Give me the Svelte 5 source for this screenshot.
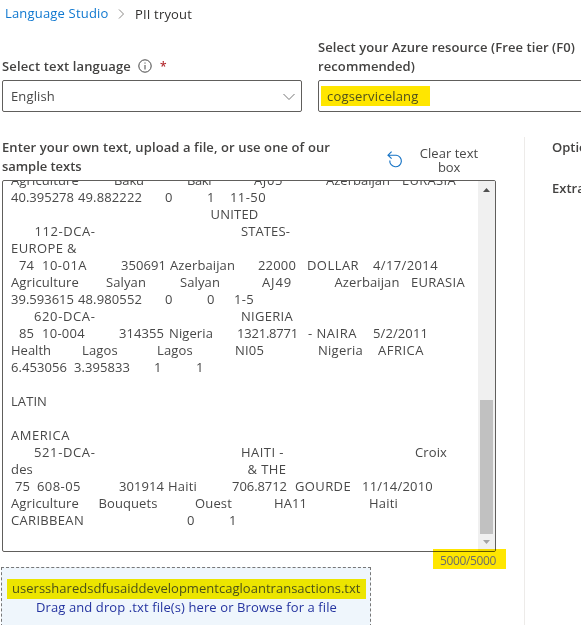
<script>
  // Each line holds runs of [start, width, text]; starts are measured from the pane's left edge.
  const lines = [
    [[11, 68, 'Agriculture'], [114, 30, 'Baku'], [187, 24, 'Baki'], [254, 29, 'AJ05'], [326, 64, 'Azerbaijan'], [402, 54, 'EURASIA']],
    [[11, 63, '40.395278'], [78, 64, '49.882222'], [165, 8, '0'], [207, 8, '1'], [230, 36, '11-50']],
    [[210.5, 48, 'UNITED']],
    [[34.5, 61, '112-DCA-'], [241, 49, 'STATES-']],
    [[11, 66, 'EUROPE &']],
    [[19, 15, '74'], [42, 45, '10-01A'], [121, 45, '350691'], [170, 65, 'Azerbaijan'], [258, 38, '22000'], [307, 52, 'DOLLAR'], [373, 65, '4/17/2014']],
    [[11, 68, 'Agriculture'], [106, 40, 'Salyan'], [180, 40, 'Salyan'], [262, 30, 'AJ49'], [334.5, 65, 'Azerbaijan'], [411, 54, 'EURASIA']],
    [[11, 63, '39.593615'], [78, 64, '48.980552'], [165, 8, '0'], [207, 8, '0'], [234, 20, '1-5']],
    [[34, 61.5, '620-DCA-'], [241, 52, 'NIGERIA']],
    [[19, 15, '85'], [42, 43, '10-004'], [119, 45, '314355'], [169, 44, 'Nigeria'], [237, 61, '1321.8771'], [308, 49, '- NAIRA'], [373, 55, '5/2/2011']],
    [[11, 40, 'Health'], [82, 36, 'Lagos'], [157, 36, 'Lagos'], [235, 29, 'NI05'], [318, 45, 'Nigeria'], [378, 46, 'AFRICA']],
    [[11, 56, '6.453056'], [74, 56, '3.395833'], [154, 8, '1'], [196, 8, '1']],
    [],
    [[11, 36, 'LATIN']],
    [],
    [[11, 59, 'AMERICA']],
    [[34, 61.5, '521-DCA-'], [241, 43, 'HAITI -'], [415, 32, 'Croix']],
    [[11, 22, 'des'], [247.5, 39, '& THE']],
    [[15, 15, '75'], [37, 44, '608-05'], [119, 45, '301914'], [168, 29, 'Haiti'], [232, 55, '706.8712'], [295, 56, 'GOURDE'], [362, 71, '11/14/2010']],
    [[11, 68, 'Agriculture'], [98.5, 59, 'Bouquets'], [195, 37, 'Ouest'], [274, 33, 'HA11'], [369, 29, 'Haiti']],
    [[11, 73, 'CARIBBEAN'], [187, 8, '0'], [229, 8, '1']]
  ];

  const gap = (line, i) => line[i][0] - (i ? line[i - 1][0] + line[i - 1][1] : 3);

  // Adjusts tracking so that a run of text fills its column.
  function fit(node, width) {
    const range = document.createRange();
    range.selectNodeContents(node);
    const n = node.textContent.length;
    if (n > 1) node.style.letterSpacing = (width - range.getBoundingClientRect().width) / n + 'px';
  }
</script>

<main>
  <nav>
    <a href="#studio" use:fit={103.5}>Language Studio</a>
    <svg width="7" height="10" viewBox="0 0 7 10"><path d="M1 .5 5.5 5 1 9.5" fill="none" stroke="#8a8886" /></svg>
    <span use:fit={57}>PII tryout</span>
  </nav>

  <section class="fields">
    <div class="field lang">
      <div class="label">
        <b use:fit={129}>Select text language</b>
        <svg class="info" width="14" height="14" viewBox="0 0 14 14"><circle cx="7" cy="7" r="6.2" fill="none" stroke="#444" /><path d="M7 6v4.5M7 3.5v1.1" stroke="#444" /></svg>
        <i>*</i>
      </div>
      <div class="select">
        <span use:fit={44}>English</span>
        <svg width="12" height="8" viewBox="0 0 12 8"><path d="M.5 1 6 6.5 11.5 1" fill="none" stroke="#777" /></svg>
      </div>
    </div>
    <div class="field resource">
      <div class="label"><b use:fit={257}>Select your Azure resource (Free tier (F0)</b><b use:fit={97}>recommended)</b></div>
      <div class="select"><mark><span use:fit={91.5}>cogservicelang</span></mark></div>
    </div>
  </section>

  <section class="work">
    <div class="left">
      <div class="tools">
        <div class="prompt"><b use:fit={328}>Enter your own text, upload a file, or use one of our</b><b use:fit={79.5}>sample texts</b></div>
        <svg width="16" height="17" viewBox="0 0 16 17"><path d="M4.6.7 1 4.2 4.6 7.6M1 4.2h8.2a5.8 5.8 0 1 1-6.4 5.3" fill="none" stroke="#1673c5" stroke-width="1.15" /></svg>
        <div class="clear"><span use:fit={58.5}>Clear text</span><span use:fit={22}>box</span></div>
      </div>
      <div class="pane">
        <div class="text">
          {#each lines as line}
            <div class="line">{#each line as run, i}<span style:margin-left="{gap(line, i)}px" style:width="{run[1]}px" use:fit={run[1]}>{run[2]}</span>{/each}</div>
          {/each}
        </div>
        <div class="bar">
          <svg width="7" height="4" viewBox="0 0 7 4"><path d="M0 4 3.5 0 7 4z" fill="#505050" /></svg>
          <div class="thumb"></div>
          <svg width="7" height="4" viewBox="0 0 7 4"><path d="M0 0h7L3.5 4z" fill="#a3a3a3" /></svg>
        </div>
      </div>
      <div class="count"><span use:fit={56}>5000/5000</span></div>
      <div class="drop">
        <div class="file"><span use:fit={348.5}>userssharedsdfusaiddevelopmentcagloantransactions.txt</span></div>
        <div class="hint"><span use:fit={301}>Drag and drop .txt file(s) here or Browse for a file</span></div>
      </div>
    </div>
    <aside><b>Options</b><b>Extracted</b></aside>
  </section>
</main>

<style>
  :global(body) { margin: 0; overflow: hidden; background: #fff; }
  main { width: 581px; height: 625px; overflow: hidden; display: flex; flex-direction: column; font: 13px/17px 'Open Sans', 'Noto Sans', sans-serif; color: #484848; }
  main * { box-sizing: border-box; }
  svg { display: block; flex: none; }
  span, b, a { white-space: nowrap; }
  b { font-weight: 600; color: #434241; }
  nav { height: 38px; padding: 5px 0 0 5px; display: flex; align-items: flex-start; color: #323130; }
  nav a { color: #0f78d0; text-decoration: none; width: 104px; }
  nav svg { margin: 4px 10px 0 9px; }
  nav span { padding-top: 1px; }
  .fields { display: flex; height: 97px; flex: none; }
  .field { display: flex; flex-direction: column; flex: none; }
  .lang { width: 300px; margin-left: 2px; }
  .resource { width: 300px; margin-left: 16px; }
  .label { height: 42px; display: flex; line-height: 19px; }
  .lang .label { align-items: flex-end; padding-bottom: 4px; }
  .lang b { width: 129px; }
  .info { margin: 0 0 3px 7px; }
  i { font: 600 12px/19px 'Open Sans', sans-serif; color: #b3292e; margin-left: 8px; }
  .resource .label { flex-direction: column; }
  .select { height: 32px; border: 1px solid #605e5c; border-radius: 2px; display: flex; align-items: center; justify-content: space-between; padding: 1px 6px 0 8px; }
  .resource .select { padding: 0 0 0 2px; }
  mark { width: 109px; height: 20px; background: #ffe600; color: #4f501c; padding: 2px 0 0 6px; }
  .work { display: flex; height: 490px; flex: none; }
  .left { width: 524px; flex: none; display: flex; flex-direction: column; }
  .tools { height: 45px; flex: none; display: flex; padding-left: 2px; }
  .prompt { width: 385px; display: flex; flex-direction: column; line-height: 19px; padding-top: 3px; }
  .tools svg { margin-top: 16px; }
  .clear { width: 92px; display: flex; flex-direction: column; align-items: center; line-height: 14px; padding-top: 11px; }
  .pane { margin-left: 2px; width: 494px; height: 372px; flex: none; border: 1px solid #605e5c; border-radius: 2px; display: flex; overflow: hidden; }
  .text { width: 475px; flex: none; margin-top: -9px; }
  .line { height: 17px; display: flex; }
  .line span { flex: none; }
  .bar { width: 17px; height: 370px; background: #f0f0f0; display: flex; flex-direction: column; align-items: center; padding: 7px 0 5px; }
  .thumb { width: 13px; height: 134px; background: #c1c1c1; margin: 208px 0 6px; }
  .count { position: relative; z-index: 1; margin: -3px 0 0 433px; width: 73px; height: 20px; flex: none; background: #ffe600; mix-blend-mode: multiply; padding: 3px 0 0 7px; font-size: 12px; color: #6c6c6c; }
  .drop { margin: -2px 0 0 1px; width: 370px; height: 60px; flex: none; border: 1px dashed #777; background: #eff6fc; padding: 11px 0 0 5px; }
  .file { width: 359px; height: 20px; background: #ece500; color: #4b5118; padding: 1px 0 0 5px; }
  .hint { color: #2534a0; padding-left: 29px; }
  aside { width: 57px; border-left: 1px solid #edebe9; padding: 2px 0 0 27px; margin-top: 2px; display: flex; flex-direction: column; gap: 24px; overflow: hidden; }
</style>
